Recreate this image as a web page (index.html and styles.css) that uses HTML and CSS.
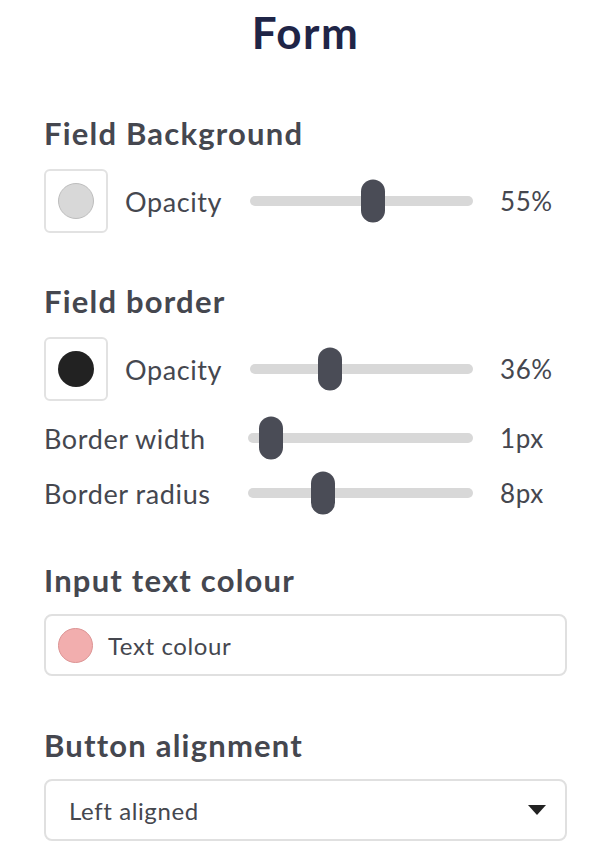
FILE: index.html
```html
<!DOCTYPE html>
<html lang="en">
<head>
    <meta charset="UTF-8">
    <meta name="viewport" content="width=device-width, initial-scale=1.0">
    <title>Form</title>
    <link rel="stylesheet" href="styles.css">
</head>
<body>
    <main class="panel">
        <h1 class="panel-title">Form</h1>

        <section class="group group-first">
            <h2 class="group-title">Field Background</h2>
            <div class="slider-row swatch-row">
                <div class="row-label">
                    <span class="swatch"><span class="dot dot-grey"></span></span>
                    <span>Opacity</span>
                </div>
                <div class="track"><span class="thumb" style="left:55%"></span></div>
                <span class="row-value">55%</span>
            </div>
        </section>

        <section class="group">
            <h2 class="group-title">Field border</h2>
            <div class="slider-row swatch-row">
                <div class="row-label">
                    <span class="swatch"><span class="dot dot-black"></span></span>
                    <span>Opacity</span>
                </div>
                <div class="track"><span class="thumb" style="left:36%"></span></div>
                <span class="row-value">36%</span>
            </div>
            <div class="slider-row">
                <div class="row-label">Border width</div>
                <div class="track track-wide"><span class="thumb" style="left:10%"></span></div>
                <span class="row-value">1px</span>
            </div>
            <div class="slider-row">
                <div class="row-label">Border radius</div>
                <div class="track track-wide"><span class="thumb" style="left:33.3%"></span></div>
                <span class="row-value">8px</span>
            </div>
        </section>

        <section class="group group-input">
            <h2 class="group-title">Input text colour</h2>
            <div class="field colour-field">
                <span class="dot dot-pink"></span>
                <span>Text colour</span>
            </div>
        </section>

        <section class="group group-select">
            <h2 class="group-title">Button alignment</h2>
            <div class="field select-field">
                <span>Left aligned</span>
                <span class="caret"></span>
            </div>
        </section>
    </main>
</body>
</html>
```

FILE: styles.css
```css
*,
*:before,
*:after{
    box-sizing: border-box;
}
body{
    margin: 0;
    background: #ffffff;
    color: #45474f;
    font-family: Lato, "Noto Sans", sans-serif;
}
.panel{
    width: 614px;
    padding: 6px 47px 20px 44px;
}
.panel-title{
    margin: 0;
    font-size: 44px;
    line-height: 52px;
    font-weight: 700;
    letter-spacing: 1.5px;
    color: #1f2547;
    text-align: center;
}
.group{
    margin-top: 50px;
}
.group-first{
    margin-top: 57px;
}
.group-title{
    margin: 0 0 18px;
    font-size: 31px;
    line-height: 36px;
    font-weight: 700;
    letter-spacing: 1.2px;
    color: #45474f;
}

/* slider rows */
.slider-row{
    display: grid;
    grid-template-columns: 179px 223px 1fr;
    column-gap: 27px;
    align-items: center;
    height: 44px;
    margin-bottom: 11px;
    font-size: 27px;
    letter-spacing: 0.6px;
}
.slider-row.swatch-row{
    height: 64px;
    margin-bottom: 15px;
}
.group:nth-of-type(2) .slider-row:last-child{
    margin-bottom: 0;
}
.row-label{
    display: flex;
    align-items: center;
    gap: 17px;
    white-space: nowrap;
}
.swatch{
    display: flex;
    align-items: center;
    justify-content: center;
    width: 64px;
    height: 64px;
    border: 2px solid #e2e2e2;
    border-radius: 6px;
}
.dot{
    display: block;
    width: 36px;
    height: 36px;
    border-radius: 50%;
}
.dot-grey{
    background: #d8d8d8;
    border: 1px solid #bdbdbd;
}
.dot-black{
    background: #222222;
}
.dot-pink{
    width: 35px;
    height: 35px;
    background: #f2aeae;
    border: 1px solid #dc9494;
}
.track{
    position: relative;
    height: 10px;
    border-radius: 5px;
    background: #d8d8d8;
}
.track-wide{
    margin-left: -2px;
}
.thumb{
    position: absolute;
    top: 50%;
    width: 24px;
    height: 43px;
    border-radius: 12px;
    background: #4a4c56;
    transform: translate(-50%, -50%);
}
.row-value{
    font-size: 26px;
    white-space: nowrap;
}

/* text fields */
.field{
    display: flex;
    align-items: center;
    height: 62px;
    border: 2px solid #e0e0e0;
    border-radius: 8px;
    font-size: 24px;
    letter-spacing: 0.6px;
}
.group-input{
    margin-top: 47px;
}
.group-input .group-title{
    margin-bottom: 16px;
}
.colour-field{
    gap: 15px;
    padding-left: 12px;
}
.group-select{
    margin-top: 51px;
}
.group-select .group-title{
    margin-bottom: 16px;
}
.select-field{
    justify-content: space-between;
    height: 62px;
    padding: 0 19px 0 23px;
}
.caret{
    width: 0;
    height: 0;
    border-left: 9px solid transparent;
    border-right: 9px solid transparent;
    border-top: 10px solid #222222;
}
```
